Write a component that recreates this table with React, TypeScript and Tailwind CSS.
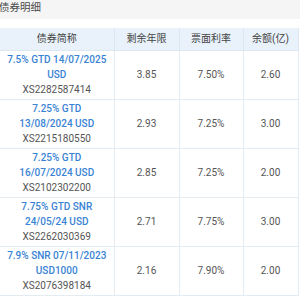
import React from 'react';

interface Bond {
  name: string;
  code: string;
  years: string;
  rate: string;
  amount: string;
}

const bonds: Bond[] = [
  { name: '7.5% GTD 14/07/2025 USD', code: 'XS2282587414', years: '3.85', rate: '7.50%', amount: '2.60' },
  { name: '7.25% GTD 13/08/2024 USD', code: 'XS2215180550', years: '2.93', rate: '7.25%', amount: '3.00' },
  { name: '7.25% GTD 16/07/2024 USD', code: 'XS2102302200', years: '2.85', rate: '7.25%', amount: '2.00' },
  { name: '7.75% GTD SNR 24/05/24 USD', code: 'XS2262030369', years: '2.71', rate: '7.75%', amount: '3.00' },
  { name: '7.9% SNR 07/11/2023 USD1000', code: 'XS2076398184', years: '2.16', rate: '7.90%', amount: '2.00' },
];

export default function App() {
  return (
    <div
      className="w-[300px] h-[300px] overflow-hidden bg-white text-[10px]"
      style={{ fontFamily: 'Roboto, "Noto Sans CJK SC", sans-serif' }}
    >
      {/* Title */}
      <div className="h-[19px] bg-[#f5f5f6] flex items-center pb-[2px]">
        <span className="ml-[-1px] text-[10.5px] text-[#4a4a4a] leading-none">债券明细</span>
      </div>

      <div className="h-[9px]" />

      <table className="w-[298px] border-collapse table-fixed">
        <colgroup>
          <col className="w-[114px]" />
          <col className="w-[65px]" />
          <col className="w-[64px]" />
          <col className="w-[55px]" />
        </colgroup>
        <thead>
          <tr className="h-[22px] bg-[#e9f2fb] text-[#444]">
            <th className="font-normal border-r border-b border-[#dce7f2] leading-none">债券简称</th>
            <th className="font-normal border-r border-b border-[#dce7f2] leading-none">剩余年限</th>
            <th className="font-normal border-r border-b border-[#dce7f2] leading-none">票面利率</th>
            <th className="font-normal border-r border-b border-[#dce7f2] leading-none">余额(亿)</th>
          </tr>
        </thead>
        <tbody>
          {bonds.map((b) => (
            <tr key={b.code} className="h-[49px] text-center text-[#555]">
              <td className="border-r border-b border-[#e3ebf3] px-[6px] leading-[15px]">
                <div className="font-medium text-[#3a83d4]">{b.name}</div>
                <div>{b.code}</div>
              </td>
              <td className="border-r border-b border-[#e3ebf3]">{b.years}</td>
              <td className="border-r border-b border-[#e3ebf3]">{b.rate}</td>
              <td className="border-r border-b border-[#e3ebf3]">{b.amount}</td>
            </tr>
          ))}
        </tbody>
      </table>
    </div>
  );
}
